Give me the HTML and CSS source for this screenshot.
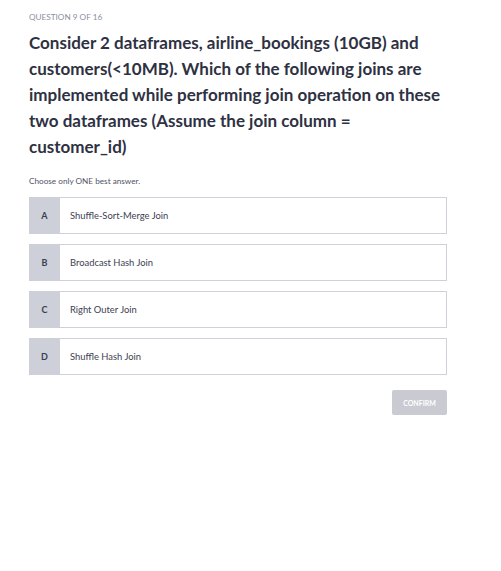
FILE: index.html
```html
<!DOCTYPE html>
<html>
<head>
<meta charset="utf-8">
<link rel="stylesheet" href="styles.css">
</head>
<body>
<div class="quiz">
  <div class="counter">QUESTION 9 OF 16</div>
  <h1 class="question">Consider 2 dataframes, airline_bookings (10GB) and customers(&lt;10MB). Which of the following joins are implemented while performing join operation on these two dataframes (Assume the join column = customer_id)</h1>
  <p class="hint">Choose only ONE best answer.</p>
  <div class="options">
    <div class="option"><span class="letter">A</span><span class="text">Shuffle-Sort-Merge Join</span></div>
    <div class="option"><span class="letter">B</span><span class="text">Broadcast Hash Join</span></div>
    <div class="option"><span class="letter">C</span><span class="text">Right Outer Join</span></div>
    <div class="option"><span class="letter">D</span><span class="text">Shuffle Hash Join</span></div>
  </div>
  <div class="actions"><button class="confirm">CONFIRM</button></div>
</div>
</body>
</html>
```
FILE: styles.css
```css
html, body {
  margin: 0;
  padding: 0;
  background: #ffffff;
}
body {
  font-family: Lato, "Liberation Sans", sans-serif;
  color: #2f3244;
}
.quiz {
  width: 418px;
  padding: 12px 0 0 29px;
}
.counter {
  font-size: 8.2px;
  line-height: 10px;
  color: #8b8fa0;
}
.question {
  margin: 8px 0 0 0;
  font-size: 17px;
  line-height: 26px;
  font-weight: 700;
  color: #2e3142;
}
.hint {
  margin: 15px 0 0 0;
  font-size: 8.2px;
  line-height: 12px;
  color: #4f5366;
}
.options {
  margin-top: 10px;
  display: flex;
  flex-direction: column;
  gap: 10px;
}
.option {
  display: flex;
  height: 37px;
  box-sizing: border-box;
  border: 1px solid #cfd0da;
  border-left: none;
}
.letter {
  width: 31px;
  background: #cdd0d9;
  display: flex;
  align-items: center;
  justify-content: center;
  font-size: 9px;
  font-weight: 700;
  color: #3a3e50;
  margin-top: -1px;
  margin-bottom: -1px;
}
.text {
  display: flex;
  align-items: center;
  padding-left: 10px;
  font-size: 9.4px;
  color: #3d4152;
}
.actions {
  display: flex;
  justify-content: flex-end;
  margin-top: 15px;
}
.confirm {
  width: 55px;
  height: 25px;
  border: none;
  border-radius: 2px;
  background: #c9cad2;
  color: #ffffff;
  font-family: Lato, "Liberation Sans", sans-serif;
  font-size: 7px;
  font-weight: 700;
  padding: 0;
}
```
